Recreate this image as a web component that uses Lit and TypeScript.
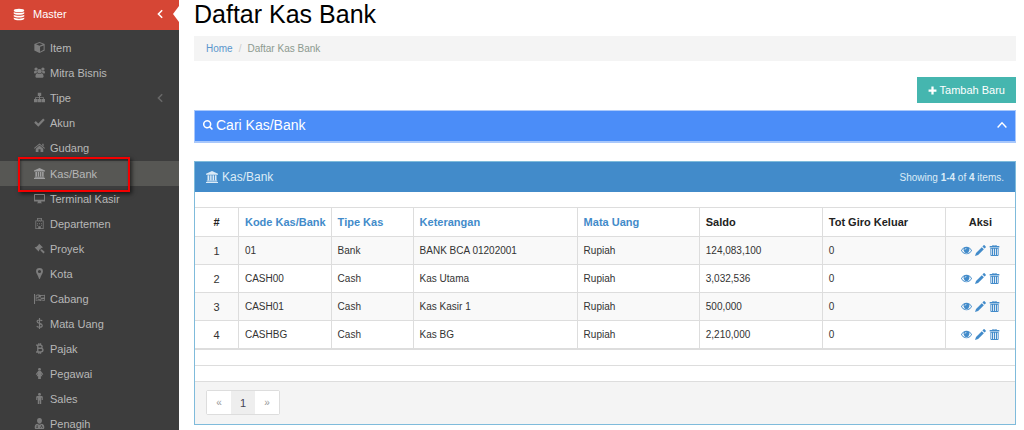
import { LitElement, html, css, svg } from "lit";
import { customElement, property } from "lit/decorators.js";
import { classMap } from "lit/directives/class-map.js";

const glyphs: Record<string, unknown> = {
  database: svg`<ellipse cx="8" cy="2.6" rx="7" ry="2.4"/><path d="M1 4.6c2 2 12 2 14 0v2c-1.500 2.400-12.500 2.400-14 0zM1 8.300c2 2 12 2 14 0v2c-1.500 2.400-12.500 2.400-14 0zM1 12c2 2 12 2 14 0v1.600c-1.500 2.800-12.500 2.800-14 0z"/>`,
  cube: svg`<path fill-rule="evenodd" d="M8 0 15.500 2.800v9.700L8 16 .5 12.500V2.800zM8 1.500 3 3.400 8 5.300l5-1.900zM8.800 7v7l5.200-2.600V5z"/>`,
  users: svg`<circle cx="8" cy="6" r="3.200"/><circle cx="3" cy="3" r="2.400"/><circle cx="13" cy="3" r="2.400"/><path d="M3.500 15.500c-1 0-1.500-.7-1.400-1.700C2.300 10.500 3.400 9 5 9c1.600 1.200 4.400 1.200 6 0 1.600 0 2.700 1.500 2.900 4.800.1 1-.4 1.700-1.400 1.700zM0 8.500C0 6.500.6 5.500 1.500 5.500c.8.6 1.900.7 2.700.4L4.600 8C3.700 8 2.800 8.600 2.200 9.400H1c-.6 0-1-.3-1-.9zM16 8.500c0-2-.6-3-1.500-3-.8.6-1.900.7-2.700.4L11.400 8c.9 0 1.800.6 2.400 1.400H15c.6 0 1-.3 1-.9z"/>`,
  sitemap: svg`<path d="M5.500 1h5v4.800H8.700V7.500H14.300V10.200H16V15h-5v-4.800h2V8.800H8.700v1.400h1.800V15h-5v-4.800h1.800V8.800H3v1.400h2V15H0v-4.800h1.700V7.500h5.600V5.800H5.500z"/>`,
  check: svg`<path d="m6.300 14-6-5.800 2.300-2.400 3.700 3.600L13.300 2.200l2.400 2.300z"/>`,
  home: svg`<path d="M8 2 16 8.700l-.9 1L8 3.900.9 9.700 0 8.700zM8 5.200l5.500 4.500V14.500H9.500v-4h-3v4h-4V9.700zM12 2.500h2v4l-2-1.700z"/>`,
  bank: svg`<path d="M8 0 16 3.500V5H0V3.500zM2 5.800h2.400v6.400H2zM5.500 5.800h2v6.400h-2zM8.700 5.800h2v6.400h-2zM11.800 5.800H14v6.400h-2.200zM1 12.700h14V14H1zM0 14.500h16V16H0z"/>`,
  desktop: svg`<path fill-rule="evenodd" d="M1 1.500h14q1 0 1 1v9q0 1-1 1h-4.500V14h1v1h-7v-1h1v-1.500H1q-1 0-1-1v-9q0-1 1-1zM1.400 3v6.800h13.200V3z"/>`,
  hospital: svg`<path fill-rule="evenodd" d="M4.500 0h7v3.500H14V16H2V3.500h2.500zM5.700 1.200v3.500H3.200v10.100h3V12h3.600v2.800h3V4.700h-2.500V1.200zM6.500 2h1v1.300h1V2h1v3.800h-1V4.300h-1v1.500h-1zM4.500 7.500h1.300V9H4.500zM7.300 7.500h1.400V9H7.300zM10.200 7.500h1.300V9h-1.300zM4.500 10h1.300v1.300H4.500zM10.200 10h1.300v1.300h-1.300z"/>`,
  gavel: svg`<path d="m7.500 1 5.300 5.300-1 1-.7-.5-1.900 1.900 1.100.8 1-.5 4.400 4.200-1.900 2-4.400-4.400.4-1-.8-1-1.900 1.800.6.800-1 1L1 6.700l1-1 .8.600L6.900 2.600 6.500 2z"/>`,
  marker: svg`<path fill-rule="evenodd" d="M8 0a5 5 0 0 1 5 5.200C13 8 10 11 8.700 15.500q-.7 1-1.400 0C6 11 3 8 3 5.200A5 5 0 0 1 8 0zm0 2.800a2.300 2.300 0 1 0 0 4.600 2.300 2.300 0 0 0 0-4.600z"/>`,
  flag: svg`<path fill-rule="evenodd" d="M0 1.500h1.500V16H0zM2.500 3.200c4-2.400 6 1.200 13.500-.7v8.500c-6.500 2.400-9-1.500-13.500.8zM3.500 4v2.600l3-.8V3.400zM6.800 6v2.700l3 .6V6.700zM10 4.300v2.500l4.800-.2V4zM3.500 8v2.200l3-.6V7.400zM10.300 9.300v1.800l4.500-.8V8.800z"/>`,
  dollar: svg`<path fill="none" stroke="currentColor" stroke-width="1.700" d="M8 0v16M12 4.300C10.500 2.500 4.500 2 4.500 5.200c0 3.400 7.500 2 7.500 5.600 0 3.400-6.300 3.200-8 .9"/>`,
  bitcoin: svg`<path fill="none" stroke="currentColor" stroke-width="2" d="M3 3h6.300c3.400 0 3.400 4.700 0 4.700H5.500 10c4 0 4 5.300 0 5.300H3M5.500 3v10M7 .5V3M9.500.5V3M7 13v2.500M9.500 13v2.500"/>`,
  female: svg`<circle cx="8" cy="2" r="2.100"/><path d="M6 4.500h4l3.500 4.700-1.300.9L10 7.300 12.200 12H10v4H6v-4H3.800L6 7.300l-2.200 2.800-1.300-.9z"/>`,
  male: svg`<circle cx="8" cy="2" r="2.100"/><path d="M5 4.500h6q1.800 0 1.800 1.500v4.300h-1.600V7h-.7v9H8.400v-5h-.8v5H5.500V7h-.7v3.300H3.200V6q0-1.500 1.800-1.500z"/>`,
  agent: svg`<path d="M8 0c2.600 0 3.600 1.800 3.600 4S10 8.500 8 8.500 4.400 6.200 4.400 4 5.400 0 8 0z"/><path fill-rule="evenodd" d="M4.500 8.500c2 1.600 5 1.600 7 0C14 9 15 11 15 13.800c0 1.500-.8 2.200-2 2.200H3c-1.200 0-2-.7-2-2.200C1 11 2 9 4.500 8.500zM4 10v2.500L3 14h3l-1-1.500V10zm6.500 0v1.500L9.300 13v1.500h.9v-1.300l.8-.7.8.7v1.300h.9V13l-1.200-1.500V10z"/>`,
  search: svg`<path fill-rule="evenodd" d="M6.700 0a6.700 6.700 0 0 1 5.500 10.500L16 14.200 14.200 16l-3.700-3.800A6.700 6.700 0 1 1 6.700 0zm0 2.400a4.300 4.300 0 1 0 0 8.600 4.300 4.300 0 0 0 0-8.600z"/>`,
  plus: svg`<path d="M6 1h4v5h5v4h-5v5H6v-5H1V6h5z"/>`,
  up: svg`<path fill="none" stroke="currentColor" stroke-width="2.300" d="m1 12 7-7.500 7 7.500"/>`,
  left: svg`<path fill="none" stroke="currentColor" stroke-width="2.500" d="M11.500 2 5.500 8l6 6"/>`,
  eye: svg`<path fill-rule="evenodd" d="M8 2.500c3.400 0 6.300 2 8 5.500-1.700 3.500-4.600 5.500-8 5.500S1.700 11.500 0 8c1.700-3.500 4.600-5.500 8-5.500zM4.300 4.700C3 5.500 2 6.600 1.300 8c1.400 2.500 3.800 4.200 6.700 4.200s5.300-1.700 6.700-4.200C14 6.600 13 5.500 11.700 4.700a4.400 4.400 0 1 1-7.400 0zM8 4.200A2.800 2.800 0 0 0 5.200 7h1A1.900 1.900 0 0 1 8 5.200z"/>`,
  pencil: svg`<path d="M12.500.5q.7-.7 1.400 0l1.600 1.600q.7.7 0 1.400l-1.700 1.700-3-3zM9.900 3.100l3 3L4.500 14.500 0 16l1.500-4.500z"/>`,
  trash: svg`<path fill-rule="evenodd" d="M5 0h6v1.500h4v2H1v-2h4zM6.200.8v.7h3.600V.8zM2 4.200h12v10.300q0 1.500-1.500 1.500h-9Q2 16 2 14.500zm1.300 1.300v9h1v-9zm2.700 0v9h1.200v-9zm2.800 0v9H10v-9zm2.900 0v9h1v-9z"/>`,
};

@customElement("ui-icon")
class UiIcon extends LitElement {
  @property() name = "";
  static styles = css`
    :host { display: inline-flex; flex: none; width: 11px; height: 11px; }
    svg { width: 100%; height: 100%; fill: currentColor; }
  `;
  render() {
    return html`<svg viewBox="0 0 16 16" aria-hidden="true">${glyphs[this.name]}</svg>`;
  }
}

const menu = [
  ["cube", "Item"], ["users", "Mitra Bisnis"], ["sitemap", "Tipe"], ["check", "Akun"],
  ["home", "Gudang"], ["bank", "Kas/Bank"], ["desktop", "Terminal Kasir"],
  ["hospital", "Departemen"], ["gavel", "Proyek"], ["marker", "Kota"], ["flag", "Cabang"],
  ["dollar", "Mata Uang"], ["bitcoin", "Pajak"], ["female", "Pegawai"], ["male", "Sales"],
  ["agent", "Penagih"],
];

@customElement("side-menu")
class SideMenu extends LitElement {
  static styles = css`
    :host { display: block; background: #3d3d3d; color: #b8b8b8; font-size: 11px; }
    a { color: inherit; text-decoration: none; display: flex; align-items: center; }
    ul { list-style: none; margin: 0; padding: 5px 0 0; }
    .master { position: relative; height: 30px; box-sizing: border-box; padding: 0 14px 2px 13px; gap: 8px; background: #d64635; color: #fff; }
    .master ui-icon { width: 12px; height: 13px; }
    .label { flex: 1; }
    .notch { position: absolute; right: 0; top: 6px; border: solid transparent; border-width: 8px 6px 8px 0; border-right-color: #fff; }
    .item { position: relative; height: 25px; padding: 0 14px 0 34px; gap: 5px; }
    .item ui-icon { color: #7c7c7c; }
    .active { margin-top: 1px; background: #575754; }
    .active ui-icon { color: #a0a0a0; }
    .marker { position: absolute; left: 18px; top: -4px; width: 108px; height: 31px; border: 2px solid #f20000; box-shadow: 2px 2px 4px #0009, inset 1px 1px 3px #0006; }
    .master .arrow, .item .arrow { width: 10px; height: 10px; }
    .item .arrow { color: #686868; }
  `;
  render() {
    return html`<nav aria-label="Master">
      <a class="master" href="#">
        <ui-icon name="database"></ui-icon><span class="label">Master</span>
        <ui-icon class="arrow" name="left"></ui-icon><span class="notch"></span>
      </a>
      <ul>
        ${menu.map(([icon, label]) => {
          const active = label === "Kas/Bank";
          return html`<li><a href="#" class=${classMap({ item: true, active })}>
            <ui-icon name=${icon}></ui-icon><span class="label">${label}</span>
            ${label === "Tipe" ? html`<ui-icon class="arrow" name="left"></ui-icon>` : ""}
            ${active ? html`<span class="marker"></span>` : ""}
          </a></li>`;
        })}
      </ul>
    </nav>`;
  }
}

const rows = [
  ["01", "Bank", "BANK BCA 01202001", "Rupiah", "124,083,100", "0"],
  ["CASH00", "Cash", "Kas Utama", "Rupiah", "3,032,536", "0"],
  ["CASH01", "Cash", "Kas Kasir 1", "Rupiah", "500,000", "0"],
  ["CASHBG", "Cash", "Kas BG", "Rupiah", "2,210,000", "0"],
];

@customElement("cash-table")
class CashTable extends LitElement {
  static styles = css`
    :host { display: block; border: 1px solid #7fbbdb; background: #fff; }
    a { color: #428bca; text-decoration: none; }
    .head { display: flex; align-items: center; height: 30px; padding: 0 11px; background: #428bca; color: #dcebf7; }
    h2 { display: flex; align-items: center; gap: 4px; margin: 0; flex: 1; font-size: 12px; font-weight: 400; }
    h2 ui-icon { width: 12px; height: 12px; }
    .summary { font-size: 10px; }
    table { width: 100%; margin-top: 15px; border-collapse: collapse; table-layout: fixed; border-top: 1px solid #ddd; border-bottom: 2px solid #ddd; }
    .c-no { width: 5.3%; } .c-code { width: 11.3%; } .c-type { width: 10%; } .c-desc { width: 20%; }
    .c-cur { width: 14.9%; } .c-num { width: 15%; } .c-act { width: 8.5%; }
    th, td { padding: 0 0 0 6px; text-align: left; border: solid #ddd; border-width: 1px 0 0 1px; white-space: nowrap; color: #333; }
    td { height: 27px; font-size: 10px; }
    th { height: 28px; font-size: 11px; color: #222; }
    th:first-child, td:first-child { border-left: 0; }
    .mid { text-align: center; padding: 0; }
    tbody tr:nth-child(odd) { background: #f9f9f9; }
    td.mid { font-size: 11px; }
    .actions { display: flex; justify-content: center; gap: 3px; }
    .actions a { display: flex; }
    .spacer { height: 15px; border-bottom: 1px solid #ddd; }
    .foot { padding: 8px 11px 9px; background: #f4f4f4; }
    .pages { display: inline-flex; vertical-align: top; background: #fff; border: 1px solid #ddd; border-radius: 2px; }
    .page { width: 24px; height: 23px; display: grid; place-items: center; font: inherit; font-size: 10px; background: #fff; color: #999; border: 0; padding: 0; }
    .current { font-size: 11px; background: #eee; color: #445; }
  `;
  render() {
    return html`
      <div class="head">
        <h2><ui-icon name="bank"></ui-icon>Kas/Bank</h2>
        <div class="summary">Showing <b>1-4</b> of <b>4</b> items.</div>
      </div>
      <table>
        <colgroup><col class="c-no"><col class="c-code"><col class="c-type"><col class="c-desc"><col class="c-cur"><col class="c-num"><col class="c-num"><col class="c-act"></colgroup>
        <thead><tr>
          <th class="mid">#</th>
          ${["Kode Kas/Bank", "Tipe Kas", "Keterangan", "Mata Uang"].map((t) => html`<th><a href="#">${t}</a></th>`)}
          <th>Saldo</th><th>Tot Giro Keluar</th><th class="mid">Aksi</th>
        </tr></thead>
        <tbody>
          ${rows.map((row, i) => html`<tr>
            <td class="mid">${i + 1}</td>
            ${row.map((cell) => html`<td>${cell}</td>`)}
            <td class="mid"><div class="actions">
              <a href="#" aria-label="View"><ui-icon name="eye"></ui-icon></a>
              <a href="#" aria-label="Update"><ui-icon name="pencil"></ui-icon></a>
              <a href="#" aria-label="Delete"><ui-icon name="trash"></ui-icon></a>
            </div></td>
          </tr>`)}
        </tbody>
      </table>
      <div class="spacer"></div>
      <div class="spacer"></div>
      <div class="foot"><div class="pages">
        <button class="page" disabled>«</button>
        <button class="page current">1</button>
        <button class="page" disabled>»</button>
      </div></div>`;
  }
}

@customElement("app-root")
class AppRoot extends LitElement {
  static styles = css`
    :host { display: grid; grid-template-columns: 179px minmax(0, 1fr); height: 100vh; overflow: hidden; background: #fff; font-family: "Liberation Sans", Arial, sans-serif; }
    main { padding: 0 8px 0 15px; }
    h1 { margin: 0; height: 36px; line-height: 29px; font-size: 25px; font-weight: 400; color: #000; }
    .crumbs { display: flex; align-items: center; gap: 6px; height: 25px; padding: 0 12px; margin-bottom: 16px; background: #f4f4f4; color: #8c9a8f; font-size: 10px; }
    .crumbs a { color: #5b96cd; text-decoration: none; }
    .sep { color: #ccc; }
    .tools { display: flex; justify-content: flex-end; margin-bottom: 7px; }
    .add { display: flex; align-items: center; gap: 3px; height: 26px; padding: 0 11px; border: 0; background: #45b6af; color: #fff; font: inherit; font-size: 11px; }
    .add ui-icon { width: 9px; height: 9px; }
    .finder { display: flex; align-items: center; gap: 3px; width: 100%; height: 33px; padding: 0 8px 2px; border: 1px solid #a9c8fb; border-bottom-width: 2px; background: #4b8df8; color: #fff; font: inherit; font-size: 14px; text-align: left; margin-bottom: 18px; }
    .finder span { flex: 1; }
    .finder ui-icon { width: 10px; height: 10px; }
  `;
  render() {
    return html`
      <side-menu></side-menu>
      <main>
        <h1>Daftar Kas Bank</h1>
        <nav class="crumbs" aria-label="Breadcrumb"><a href="#">Home</a><span class="sep">/</span><span>Daftar Kas Bank</span></nav>
        <div class="tools"><button class="add"><ui-icon name="plus"></ui-icon>Tambah Baru</button></div>
        <button class="finder"><ui-icon name="search"></ui-icon><span>Cari Kas/Bank</span><ui-icon name="up"></ui-icon></button>
        <cash-table></cash-table>
      </main>`;
  }
}
